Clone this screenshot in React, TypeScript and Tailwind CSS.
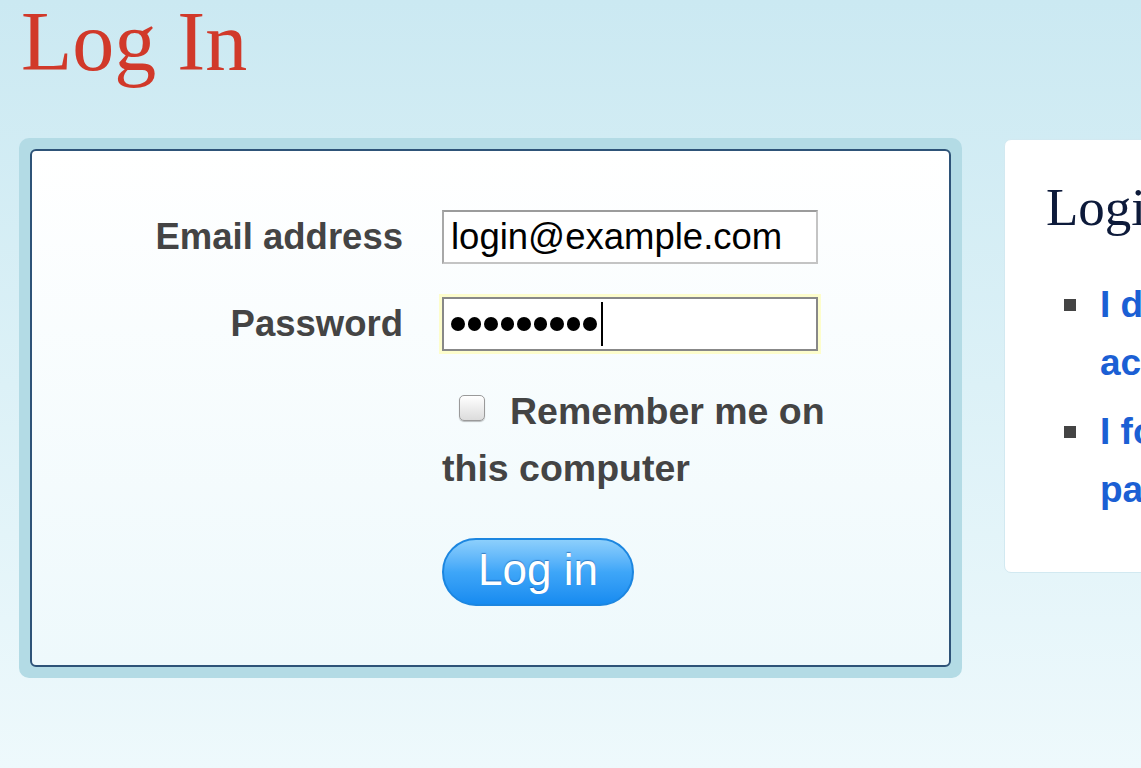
import React from 'react'

/* ── Log In page ─────────────────────────────
 * Layout: title, then the form card next to a help panel
 * which runs off the right edge of the window.
 * ─────────────────────────────────────────── */

const sans = 'font-["Liberation_Sans",Arial,sans-serif]'
const serif = 'font-["Liberation_Serif","Times_New_Roman",serif]'

function PasswordMask({ count }: { count: number }) {
  return (
    <span className="flex items-center gap-[3px]" aria-label="password">
      {Array.from({ length: count }).map((_, i) => (
        <span key={i} className="block w-[13.5px] h-[13.5px] rounded-full bg-black" />
      ))}
      <span className="block w-[2px] h-[44px] bg-black ml-[1px]" />
    </span>
  )
}

function LoginForm() {
  return (
    <div className="rounded-[10px] bg-[#b3dbe5] p-[11px] w-[943px] shrink-0">
      <div className="h-[518px] rounded-[6px] border-2 border-[#2e5378] bg-gradient-to-b from-white to-[#eef9fc] pt-[59px]">
        <div className={`grid grid-cols-[371px_376px] gap-x-[39px] gap-y-[32px] items-center ${sans}`}>
          <label className="text-right text-[36.5px] font-bold text-[#444]">Email address</label>
          <div className="h-[54px] flex items-center border-2 border-[#c4c4c4] border-t-[#9c9c9c] border-l-[#a8a8a8] bg-white pl-[7px] text-[36.5px] text-black">
            login@example.com
          </div>

          <label className="text-right text-[36.5px] font-bold text-[#444]">Password</label>
          <div className="h-[54px] flex items-center border-2 border-[#888] bg-white pl-[7px] shadow-[0_0_0_3px_#fdfdcc]">
            <PasswordMask count={9} />
          </div>
        </div>

        <div className={`ml-[410px] mt-[31px] w-[410px] text-[37.5px] leading-[57px] font-bold text-[#444] ${sans}`}>
          <span className="inline-block align-middle -mt-[12px] ml-[17px] mr-[25px] w-[26px] h-[26px] rounded-[5px] border border-[#9a9a9a] bg-gradient-to-b from-white to-[#dcdcdc] shadow-[0_1px_1px_rgba(0,0,0,0.25)]" />
          Remember me on this computer
        </div>

        <button
          className={`ml-[410px] mt-[41px] w-[192px] h-[68px] rounded-full border-2 border-[#1c86e0] bg-gradient-to-b from-[#8ccffc] via-[#3ea6f8] to-[#168bf0] text-white text-[44px] leading-none pb-[3px] [text-shadow:0_-1px_1px_rgba(0,60,140,0.5)] ${sans}`}
        >
          Log in
        </button>
      </div>
    </div>
  )
}

function HelpPanel() {
  const links = ["I don't have an account", 'I forgot my password']
  return (
    <div className="mt-[1px] w-[440px] h-[434px] shrink-0 rounded-[7px] border border-[#d2e9f1] bg-white pt-[41px] pl-[41px]">
      <h2 className={`text-[53px] leading-none text-[#0d1a3a] ${serif}`}>Login Help</h2>
      <ul className={`mt-[42px] ml-[18px] space-y-[11px] ${sans}`}>
        {links.map((l) => (
          <li key={l} className="flex items-start gap-[24px]">
            <span className="mt-[23px] block w-[12px] h-[12px] bg-[#444] shrink-0" />
            <a className="w-[300px] text-[37px] leading-[58px] font-bold text-[#1b5fd4]">{l}</a>
          </li>
        ))}
      </ul>
    </div>
  )
}

export default function App() {
  return (
    <div className="w-[1141px] h-[768px] overflow-hidden bg-gradient-to-b from-[#cbe9f2] via-[#dcf1f7] to-[#eef9fc]">
      <h1 className={`pl-[21px] pt-[2px] text-[84px] leading-[80px] text-[#d1392a] ${serif}`}>Log In</h1>
      <div className="mt-[56px] ml-[19px] flex items-start gap-[42px]">
        <LoginForm />
        <HelpPanel />
      </div>
    </div>
  )
}
